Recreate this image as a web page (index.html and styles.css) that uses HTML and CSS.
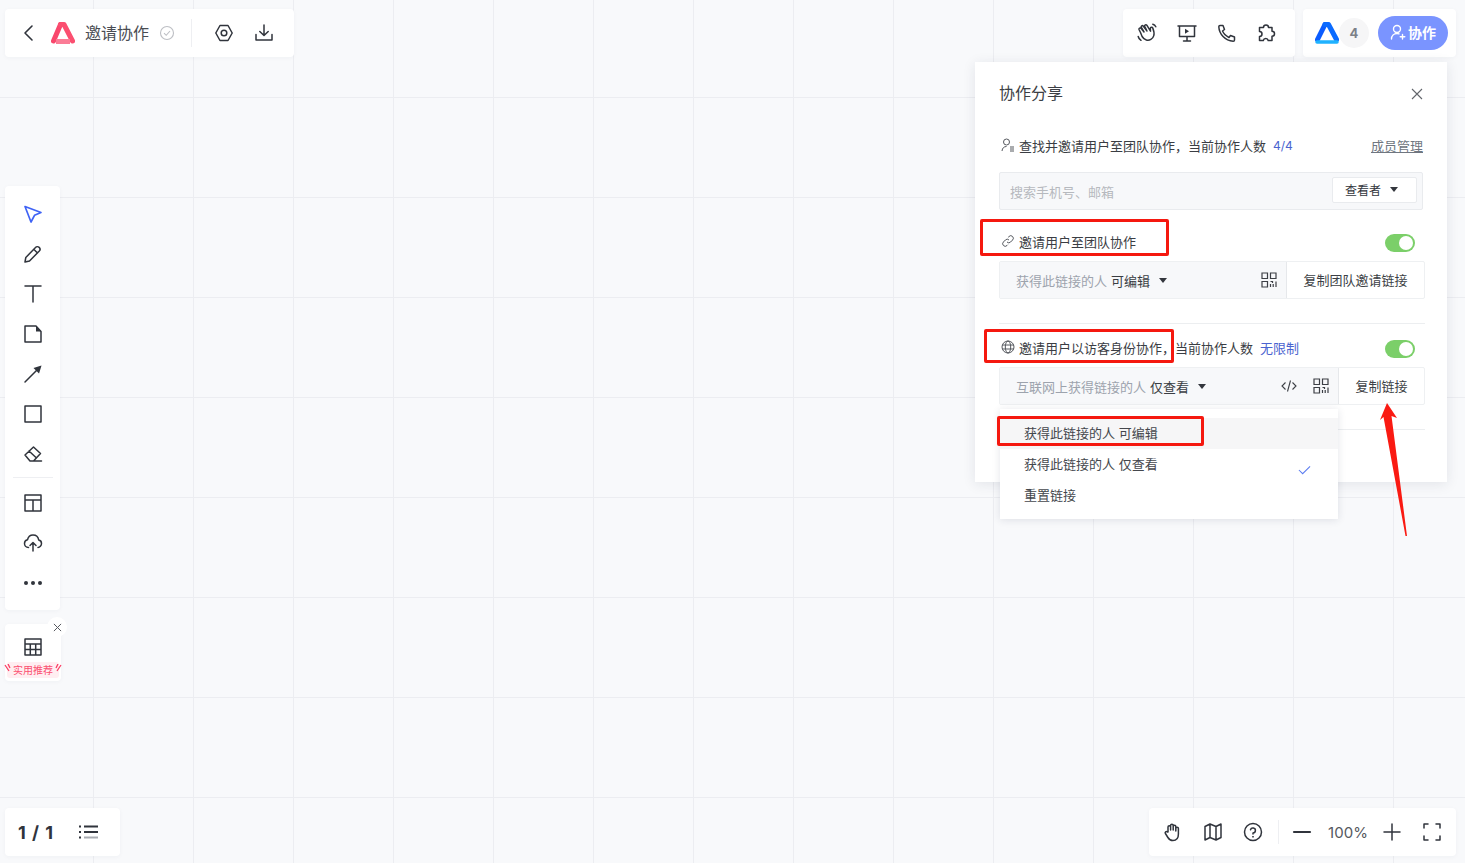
FILE: index.html
```html
<!DOCTYPE html>
<html lang="zh-CN">
<head>
    <meta charset="UTF-8">
    <meta name="viewport" content="width=device-width, initial-scale=1.0">
    <title>邀请协作</title>
    <link rel="stylesheet" href="styles.css">
</head>
<body>
    <div class="canvas">

        <div class="bar title-bar">
            <svg class="icon back" viewBox="0 0 20 20"><path d="M13 3 6 10l7 7"/></svg>
            <svg class="logo" viewBox="0 0 24 22">
                <path d="M9.500 2.500 2.500 19" stroke="#f9476c" stroke-width="5" stroke-linecap="round" fill="none"/>
                <path d="M9.500 2.500h3.500L21.500 19" stroke="#fb4f70" stroke-width="5" stroke-linecap="round" stroke-linejoin="round" fill="none"/>
                <path d="M5 19.500h14" stroke="#fb7c96" stroke-width="5" fill="none"/>
            </svg>
            <span class="doc-name">邀请协作</span>
            <svg class="saved" viewBox="0 0 16 16"><circle cx="8" cy="8" r="6.5"/><path d="m5 8.2 2.2 2.1L11 6"/></svg>
            <span class="bar-sep"></span>
            <svg class="icon" viewBox="0 0 20 20"><path d="M6 2.5h8l4.2 7.5-4.2 7.5H6L1.800 10z"/><circle cx="10" cy="10" r="2.800"/></svg>
            <svg class="icon" viewBox="0 0 20 20"><path d="M10 2v10M5.800 8.500 10 12.500l4.200-4M2 11.500V17h16v-5.500"/></svg>
        </div>

        <div class="bar tools-bar">
            <svg class="icon" viewBox="0 0 20 20"><path d="M3.500 9.500 2 6.500a1.200 1.200 0 0 1 2-1.200L7 9 4.200 4.200a1.200 1.200 0 0 1 2-1.200L10 8 7.700 3.200a1.200 1.200 0 0 1 2.100-1l3.700 6-.2-2.700a1.300 1.300 0 0 1 2.500-.4c1 2.600 1.800 5 1 7.500-1 3.400-4.300 5.300-7.500 4.400-2-.6-3.200-1.800-4.200-3.500zM15.800 1.200c1.400.4 2.400 1.300 3 2.600M1.200 13.500c.3 1.500 1.200 2.800 2.800 3.800"/></svg>
            <svg class="icon" viewBox="0 0 20 20"><path d="M1 3h18M2.500 3v10.500h15V3M10 13.500V18M6.500 18h7"/><path class="solid" d="M8 5.800v5l4-2.500z"/></svg>
            <svg class="icon" viewBox="0 0 20 20"><path d="M3 2.500h3l1.500 4L5.500 8c1 2.500 3 4.500 6.500 6.500l1.500-2 4 1.500v3c0 .8-.6 1.300-1.300 1.300C8 17.800 2.200 11 1.800 3.800 1.800 3 2.300 2.500 3 2.500z"/></svg>
            <svg class="icon" viewBox="0 0 20 20"><path d="M6.500 4.500a2.500 2.500 0 0 1 5 0H15v3.800a2.500 2.500 0 0 1 0 5v4.200h-3.800a2.500 2.500 0 0 0-4.900 0H2.500v-4a2.500 2.500 0 0 0 0-5V4.500z"/></svg>
        </div>

        <div class="bar team-bar">
            <svg class="team-logo" viewBox="0 0 24 22">
                <path d="M10 2.500 2.500 17.500" stroke="#0b5cff" stroke-width="5" stroke-linecap="round" fill="none"/>
                <path d="M10 2.500h3.500L21.500 17.500" stroke="#0b6bff" stroke-width="5" stroke-linecap="round" stroke-linejoin="round" fill="none"/>
                <path d="M2 20h20" stroke="#1fb2ff" stroke-width="3.500" stroke-linecap="round" fill="none"/>
            </svg>
            <span class="count-badge">4</span>
            <button class="collab-btn" type="button">
                <svg viewBox="0 0 16 16"><circle cx="7" cy="5" r="3.500"/><path d="M1.500 15c0-3.500 2.500-5.500 5.500-5.500 1 0 1.500.2 2 .4M12.500 10.500v4.500M10.200 12.700h4.600"/></svg>
                协作
            </button>
        </div>

        <div class="share-panel">
            <div class="panel-head">
                <h2>协作分享</h2>
                <svg class="close" viewBox="0 0 12 12"><path d="m1 1 10 10M11 1 1 11"/></svg>
            </div>

            <div class="info-row first">
                <svg class="row-icon" viewBox="0 0 14 14"><circle cx="5.500" cy="4" r="3"/><path d="M1 13c.3-3 2-4.500 4.500-4.500M9 9h4M9 11h4M9 13h4"/></svg>
                <span>查找并邀请用户至团队协作，当前协作人数</span>
                <span class="blue count">4/4</span>
                <a class="manage" href="#">成员管理</a>
            </div>
            <div class="search-box">
                <span class="placeholder">搜索手机号、邮箱</span>
                <span class="role-select">查看者<i class="caret"></i></span>
            </div>

            <div class="info-row second">
                <svg class="row-icon" viewBox="0 0 14 14"><path d="M6 8a2.500 2.500 0 0 0 3.600 0l2-2A2.500 2.500 0 0 0 8 2.500l-.8.8M8 6a2.500 2.500 0 0 0-3.600 0l-2 2A2.500 2.500 0 0 0 6 11.500l.8-.8"/></svg>
                <span>邀请用户至团队协作</span>
                <span class="toggle"></span>
            </div>
            <div class="link-box">
                <div class="link-main">
                    <span class="muted">获得此链接的人</span>
                    <span class="perm">可编辑</span>
                    <i class="caret"></i>
                    <svg class="qr" viewBox="0 0 16 16"><path d="M1 1h5.500v5.500H1zM9.500 1H15v5.500H9.500zM1 9.500h5.500V15H1z"/><path d="M9.500 9.500h2v1.500M9.500 12v3M12.200 12v3M15 9.500V15"/></svg>
                </div>
                <span class="copy-btn wide">复制团队邀请链接</span>
            </div>

            <div class="rule first-rule"></div>

            <div class="info-row third">
                <svg class="row-icon" viewBox="0 0 14 14"><circle cx="7" cy="7" r="6"/><ellipse cx="7" cy="7" rx="2.700" ry="6"/><path d="M1 5h12M1 9h12"/></svg>
                <span>邀请用户以访客身份协作，当前协作人数</span>
                <span class="blue limit">无限制</span>
                <span class="toggle"></span>
            </div>
            <div class="link-box">
                <div class="link-main">
                    <span class="muted">互联网上获得链接的人</span>
                    <span class="perm">仅查看</span>
                    <i class="caret"></i>
                    <svg class="code" viewBox="0 0 16 16"><path d="M4.500 4.500 1 8l3.500 3.500M11.500 4.500 15 8l-3.500 3.500M9.500 2.500l-3 11"/></svg>
                    <svg class="qr" viewBox="0 0 16 16"><path d="M1 1h5.500v5.500H1zM9.500 1H15v5.500H9.500zM1 9.500h5.500V15H1z"/><path d="M9.500 9.500h2v1.500M9.500 12v3M12.200 12v3M15 9.500V15"/></svg>
                </div>
                <span class="copy-btn">复制链接</span>
            </div>

            <div class="rule second-rule"></div>
        </div>

        <div class="perm-menu">
            <div class="menu-item active">获得此链接的人 可编辑</div>
            <div class="menu-item">获得此链接的人 仅查看
                <svg class="tick" viewBox="0 0 14 10"><path d="m1 5 4 4 8-8"/></svg>
            </div>
            <div class="menu-item">重置链接</div>
        </div>

        <div class="bar side-bar">
            <svg class="icon pointer" viewBox="0 0 20 20"><path d="M2 2.500 18 8.500l-6.500 2.800L8 18z"/></svg>
            <svg class="icon" viewBox="0 0 20 20"><path d="M2 18l.8-4.500L12.500 3.500a2.500 2.500 0 0 1 3.800 3.500L6.500 17zM11 5.500l3.500 3.500"/></svg>
            <svg class="icon" viewBox="0 0 20 20"><path d="M2 2h16M10 2v16"/></svg>
            <svg class="icon" viewBox="0 0 20 20"><path d="M2 2h11l5 5.500V18H2z"/><path class="solid" d="M13 2l5 5.500h-5z"/></svg>
            <svg class="icon" viewBox="0 0 20 20"><path d="M2 18 15 5"/><path class="solid" d="M10.500 4 18.500 1.500 16 9.500z"/></svg>
            <svg class="icon" viewBox="0 0 20 20"><path d="M2 2h16v16H2z"/></svg>
            <svg class="icon" viewBox="0 0 20 20"><path d="M2 11 10.500 3l7 6.500-7 7.500H7zM6 7l7.500 7M7 17h11.500"/></svg>
            <span class="side-sep"></span>
            <svg class="icon" viewBox="0 0 20 20"><path d="M2 2h16v16H2zM2 7h16M10 7v11"/></svg>
            <svg class="icon" viewBox="0 0 20 20"><path d="M5.500 14.500C3 14.500 1.500 12.500 1.500 10.500c0-2 1.500-3.500 3-3.800C5.200 4 7.500 2 10 2c3 0 5.300 2.200 5.700 5 1.700.3 2.800 1.800 2.800 3.500 0 2.200-1.800 4-3.500 4M10 18v-8M7 12.500l3-3 3 3"/></svg>
            <div class="dots"><i></i><i></i><i></i></div>
        </div>

        <div class="bar recommend">
            <svg class="icon" viewBox="0 0 20 20"><path d="M2 2h16v16H2zM2 7h16M2 12.500h16M7.300 7v11M12.700 7v11"/></svg>
            <span class="recommend-tag">实用推荐</span>
            <svg class="ribbon ribbon-l" viewBox="0 0 8 8"><path d="M1 1 5 7M4 0l2 4"/></svg>
            <svg class="ribbon ribbon-r" viewBox="0 0 8 8"><path d="M7 1 3 7M4 0 2 4"/></svg>
            <span class="recommend-close"><svg viewBox="0 0 10 10"><path d="m1 1 8 8M9 1 1 9"/></svg></span>
        </div>

        <div class="bar page-bar">
            <span class="page-num">1 / 1</span>
            <svg class="list" viewBox="0 0 20 14"><path d="M5 1.500h14M5 7h14"/><path class="soft" d="M5 12.500h14"/><path d="M0 1.500h2M0 7h2M0 12.500h2"/></svg>
        </div>

        <div class="bar zoom-bar">
            <svg class="icon" viewBox="0 0 20 20"><path d="M5 10V5a1.300 1.300 0 0 1 2.600 0v3V3.500a1.300 1.300 0 0 1 2.600 0V8 4.500a1.300 1.300 0 0 1 2.600 0V9 6.500a1.300 1.300 0 0 1 2.600 0V12c0 4-2.200 6.500-5.500 6.500-2.500 0-3.800-1-5-3l-2.500-4c-.8-1.300.8-2.600 2-1.500z"/></svg>
            <svg class="icon" viewBox="0 0 20 20"><path d="M2 4.500 7 2l6 2.500L18 2v13.500L13 18l-6-2.500L2 18zM7 2v13.500M13 4.500V18"/></svg>
            <svg class="icon" viewBox="0 0 20 20"><circle cx="10" cy="10" r="8.500"/><path d="M7.500 7.800A2.500 2.500 0 1 1 10 11v1"/><path class="solid" d="M9.200 14h1.600v1.600H9.200z"/></svg>
            <span class="bar-sep"></span>
            <svg class="icon" viewBox="0 0 20 20"><path class="thick" d="M2 10h16"/></svg>
            <span class="zoom-val">100%</span>
            <svg class="icon" viewBox="0 0 20 20"><path d="M2 10h16M10 2v16"/></svg>
            <svg class="icon" viewBox="0 0 20 20"><path d="M2 6V2h4M14 2h4v4M18 14v4h-4M6 18H2v-4"/></svg>
        </div>

        <!-- red annotations drawn on top of the screenshot -->
        <div class="mark mark-a"></div>
        <div class="mark mark-b"></div>
        <div class="mark mark-c"></div>
        <svg class="red-arrow" viewBox="0 0 30 135"><path d="M7 0 17 15 11.500 13 27 133 25.500 133 3.500 14 0 17z"/></svg>
    </div>
</body>
</html>
```

FILE: styles.css
```css
* {
    box-sizing: border-box;
}

html,
body {
    height: 100%;
    margin: 0;
    overflow: hidden;
}

body {
    font-family: Inter, "Noto Sans CJK SC", sans-serif;
    font-size: 13px;
    color: #33363d;
}

svg {
    display: block;
    flex: none;
}

.canvas {
    position: relative;
    width: 100%;
    height: 100%;
    background-color: #f8f9fb;
    background-image:
        linear-gradient(to right, #ecedf1 1px, transparent 1px),
        linear-gradient(to bottom, #ecedf1 1px, transparent 1px);
    background-size: 100px 100px;
    background-position: 93px 97px;
}

.bar {
    position: absolute;
    display: flex;
    align-items: center;
    background: #fff;
    border-radius: 4px;
    box-shadow: 0 1px 4px rgba(30, 40, 70, 0.04);
}

.icon {
    width: 20px;
    height: 20px;
    fill: none;
    stroke: #30343c;
    stroke-width: 1.5;
    stroke-linejoin: round;
    stroke-linecap: round;
}

.icon .solid {
    fill: #30343c;
    stroke: none;
}

.icon .thick {
    stroke-width: 2.2;
}

.bar-sep {
    width: 1px;
    height: 28px;
    background: #eeeff2;
}

/* top left */
.title-bar {
    left: 5px;
    top: 9px;
    width: 289px;
    height: 48px;
    padding-left: 14px;
}

.back {
    stroke-width: 1.6;
}

.logo {
    width: 24px;
    height: 22px;
    margin-left: 12px;
}

.doc-name {
    margin-left: 10px;
    padding-bottom: 2px;
    font-size: 16px;
    color: #494c52;
}

.saved {
    width: 16px;
    height: 16px;
    margin-left: 10px;
    fill: none;
    stroke: #bdbfc4;
    stroke-width: 1.100;
}

.title-bar .bar-sep {
    margin: 0 22px 0 16px;
}

.title-bar .bar-sep + .icon {
    margin-right: 20px;
}

/* top right */
.tools-bar {
    left: 1123px;
    top: 9px;
    width: 172px;
    height: 48px;
    padding-left: 14px;
    gap: 20px;
}

.team-bar {
    left: 1303px;
    top: 9px;
    width: 153px;
    height: 48px;
    padding-left: 12px;
}

.team-logo {
    width: 24px;
    height: 22px;
}

.count-badge {
    width: 30px;
    height: 30px;
    border-radius: 50%;
    background: #f6f6f7;
    color: #7c8088;
    font-size: 13px;
    font-weight: 700;
    line-height: 30px;
    text-align: center;
}

.collab-btn {
    display: flex;
    align-items: center;
    justify-content: center;
    gap: 2px;
    width: 70px;
    height: 34px;
    margin-left: 9px;
    padding: 0 0 2px;
    border: none;
    border-radius: 17px;
    background: #7a94ff;
    color: #fff;
    font-family: inherit;
    font-size: 14px;
    font-weight: 700;
}

.collab-btn svg {
    width: 16px;
    height: 16px;
    fill: none;
    stroke: #fff;
    stroke-width: 1.400;
    stroke-linecap: round;
}

/* share panel */
.share-panel {
    position: absolute;
    left: 975px;
    top: 62px;
    width: 472px;
    height: 420px;
    padding: 0 24px;
    background: #fff;
    box-shadow: 0 2px 12px rgba(30, 40, 70, 0.1);
}

.panel-head {
    display: flex;
    align-items: center;
    justify-content: space-between;
    height: 62px;
}

.panel-head h2 {
    margin: 0 0 2px;
    font-size: 16px;
    font-weight: 400;
    color: #3c3f45;
}

.close {
    width: 12px;
    height: 12px;
    margin-top: 2px;
    fill: none;
    stroke: #62656b;
    stroke-width: 1.100;
}

.info-row {
    display: flex;
    align-items: center;
    height: 20px;
    padding-bottom: 2px;
    white-space: nowrap;
    color: #3a3d43;
}

.info-row.first {
    margin-top: 12px;
}

.info-row.second {
    margin-top: 22px;
}

.info-row.third {
    margin-top: 14px;
}

.row-icon {
    width: 14px;
    height: 14px;
    margin: 0 4px 0 2px;
    fill: none;
    stroke: #55585e;
    stroke-width: 1;
}

.blue {
    color: #4a63cf;
}

.count {
    margin-left: 7px;
    font-size: 12px;
}

.limit {
    margin-left: 7px;
}

.manage {
    margin-left: auto;
    color: #6f7680;
    text-decoration: underline;
}

.search-box {
    display: flex;
    align-items: center;
    justify-content: space-between;
    height: 38px;
    margin-top: 16px;
    padding: 0 5px 0 10px;
    background: #f7f8fa;
    border: 1px solid #e9ebee;
    border-radius: 2px;
}

.placeholder {
    color: #b6b9be;
}

.role-select {
    display: flex;
    align-items: center;
    width: 85px;
    height: 26px;
    margin-bottom: 2px;
    padding: 0 0 2px 12px;
    background: #fff;
    border: 1px solid #e9ebee;
    border-radius: 2px;
    font-size: 12px;
}

.caret {
    width: 0;
    height: 0;
    margin-left: 9px;
    border-left: 4px solid transparent;
    border-right: 4px solid transparent;
    border-top: 5px solid #33363d;
}

.toggle {
    position: relative;
    width: 30px;
    height: 18px;
    margin-left: auto;
    margin-top: 4px;
    margin-right: 8px;
    border-radius: 9px;
    background: #7bcf69;
}

.toggle::after {
    content: '';
    position: absolute;
    right: 2px;
    top: 2px;
    width: 14px;
    height: 14px;
    border-radius: 50%;
    background: #fff;
}

.link-box {
    display: flex;
    height: 38px;
    width: 426px;
    margin-top: 9px;
    background: #fff;
    border: 1px solid #eef0f2;
    border-radius: 2px;
}

.link-main {
    flex: 1;
    display: flex;
    align-items: center;
    padding: 0 9px 0 16px;
    background: #f7f8fa;
    border-right: 1px solid #e6e8eb;
}

.muted {
    color: #9da3ad;
}

.perm {
    margin-left: 4px;
    color: #3a3d43;
}

.qr {
    width: 16px;
    height: 16px;
    margin-left: auto;
    fill: none;
    stroke: #3c3f45;
    stroke-width: 1.200;
}

.code {
    width: 16px;
    height: 16px;
    margin-left: auto;
    fill: none;
    stroke: #3c3f45;
    stroke-width: 1.100;
}

.code + .qr {
    margin-left: 16px;
}

.copy-btn {
    display: flex;
    align-items: center;
    justify-content: center;
    width: 85px;
    padding-bottom: 2px;
    color: #3c3f45;
}

.copy-btn.wide {
    width: 137px;
}

.rule {
    width: 426px;
    height: 1px;
    background: #eceef0;
}

.first-rule {
    margin-top: 24px;
}

.second-rule {
    margin-top: 24px;
}

/* dropdown */
.perm-menu {
    position: absolute;
    left: 1000px;
    top: 409px;
    width: 338px;
    height: 110px;
    padding-top: 9px;
    background: #fff;
    box-shadow: 0 1px 8px rgba(30, 40, 70, 0.12);
}

.menu-item {
    position: relative;
    height: 31px;
    padding-left: 24px;
    line-height: 31px;
    color: #44474d;
}

.menu-item.active {
    background: #f6f6f7;
}

.tick {
    position: absolute;
    right: 27px;
    top: 16px;
    width: 13px;
    height: 10px;
    fill: none;
    stroke: #5b7cf0;
    stroke-width: 1.100;
}

/* left tools */
.side-bar {
    left: 5px;
    top: 186px;
    width: 55px;
    height: 424px;
    flex-direction: column;
    padding-top: 18px;
    gap: 20px;
}

.pointer {
    stroke: #3f63f5;
    stroke-width: 1.700;
}

.side-sep {
    width: 40px;
    height: 1px;
    margin: -7px 0 -5px;
    background: #eeeff2;
}

.dots {
    display: flex;
    gap: 3px;
    height: 20px;
    align-items: center;
}

.dots i {
    width: 4px;
    height: 4px;
    border-radius: 50%;
    background: #30343c;
}

.recommend {
    left: 5px;
    top: 624px;
    width: 56px;
    height: 57px;
    flex-direction: column;
    padding-top: 13px;
}

.recommend-tag {
    height: 16px;
    margin-top: 5px;
    padding: 0 6px;
    border-radius: 3px;
    background: #ffeef1;
    color: #fb4f70;
    font-size: 10px;
    line-height: 16px;
    white-space: nowrap;
}

.ribbon {
    position: absolute;
    top: 40px;
    width: 8px;
    height: 8px;
    fill: none;
    stroke: #fb3f65;
    stroke-width: 1.300;
}

.ribbon-l {
    left: -1px;
}

.ribbon-r {
    right: -1px;
}

.recommend-close {
    position: absolute;
    right: -6px;
    top: -7px;
    display: flex;
    align-items: center;
    justify-content: center;
    width: 20px;
    height: 20px;
    border-radius: 50%;
    background: #fff;
}

.recommend-close svg {
    width: 9px;
    height: 9px;
    fill: none;
    stroke: #55585e;
    stroke-width: 1.100;
}

/* bottom */
.page-bar {
    left: 5px;
    top: 808px;
    width: 115px;
    height: 48px;
    padding-left: 13px;
}

.page-num {
    font-size: 18px;
    font-weight: 700;
    color: #30343c;
    word-spacing: 2px;
}

.list {
    width: 20px;
    height: 14px;
    margin-left: 26px;
    fill: none;
    stroke: #30343c;
    stroke-width: 2;
}

.list .soft {
    stroke: #a9acb2;
}

.zoom-bar {
    left: 1149px;
    top: 808px;
    width: 307px;
    height: 48px;
    padding-left: 14px;
    gap: 20px;
}

.zoom-bar .bar-sep {
    height: 24px;
    margin-right: -7px;
    margin-left: -5px;
}

.zoom-val {
    width: 40px;
    margin: 0 -6px 0 -4px;
    font-size: 15px;
    color: #55585e;
    text-align: center;
}

/* annotations */
.mark {
    position: absolute;
    border: 3px solid #f5180f;
    border-radius: 2px;
}

.mark-a {
    left: 980px;
    top: 219px;
    width: 189px;
    height: 37px;
}

.mark-b {
    left: 984px;
    top: 329px;
    width: 190px;
    height: 34px;
}

.mark-c {
    left: 997px;
    top: 416px;
    width: 207px;
    height: 30px;
}

.red-arrow {
    position: absolute;
    left: 1380px;
    top: 403px;
    width: 30px;
    height: 135px;
    fill: #fa1a12;
}
```
